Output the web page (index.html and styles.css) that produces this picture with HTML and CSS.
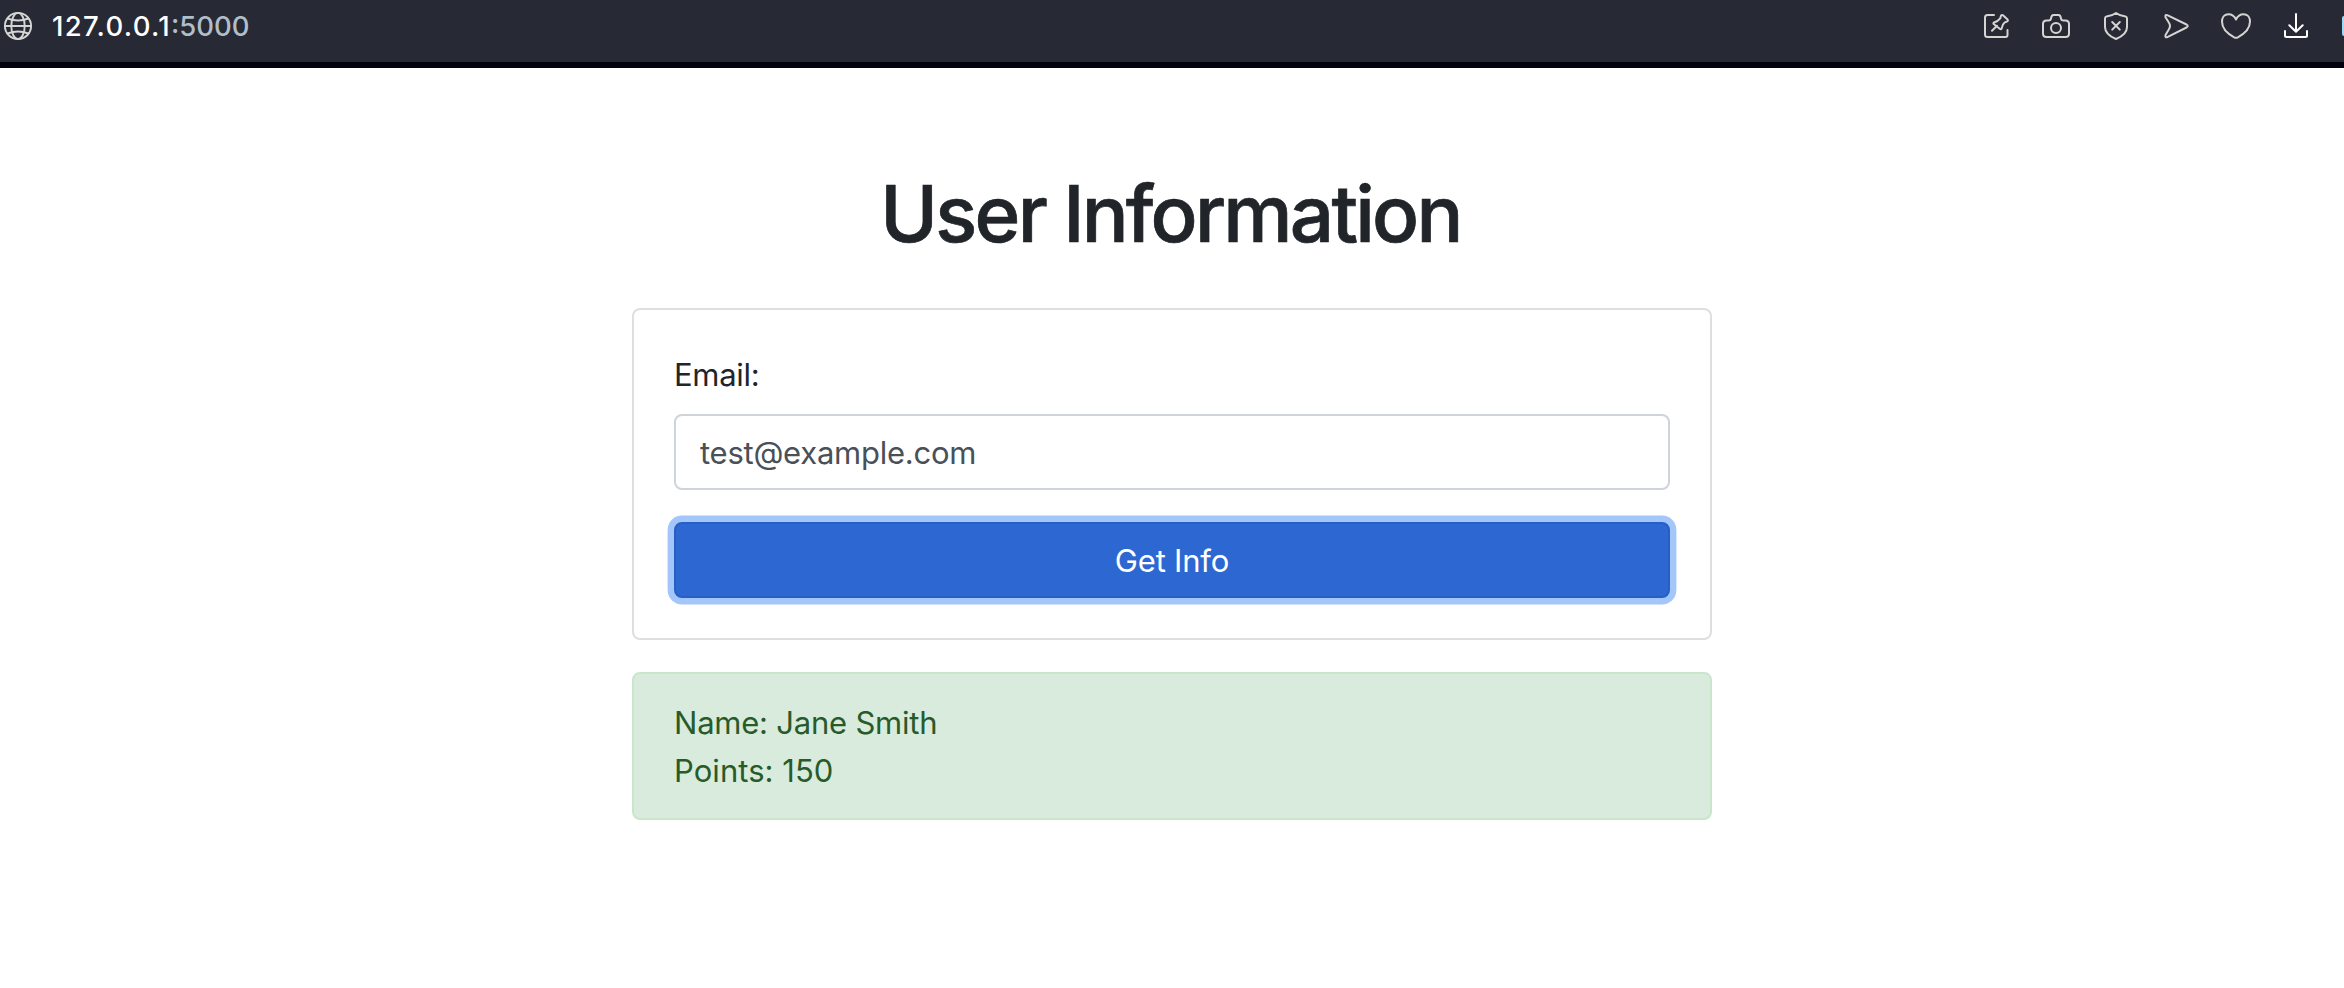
FILE: index.html
```html
<!DOCTYPE html>
<html lang="en">
<head>
<meta charset="utf-8">
<title>User Information</title>
<link rel="stylesheet" href="styles.css">
</head>
<body>
<header class="toolbar">
  <div class="address">
    <svg class="globe" width="30" height="30" viewBox="0 0 30 30">
      <circle cx="15" cy="15" r="13.1"/><ellipse cx="15" cy="15" rx="6.7" ry="13.1"/>
      <path d="M2 15H28M4.6 7.5Q15 11.5 25.4 7.5M4.6 22.5Q15 18.500 25.400 22.500"/>
    </svg>
    <span class="url"><span class="host">127.0.0.1</span><span class="port">:5000</span></span>
  </div>
  <div class="actions">
    <svg width="60" height="52" viewBox="0 0 60 52"><path d="M28 15H21.500Q19 15 19 17.500V34.500Q19 37 21.500 37H39.500Q41.500 37 41.500 35V30M26 30.700L31 25.700M27.600 22.800Q31.800 21.500 34.200 18.400L35 15.800Q35.700 14.400 37 15.300L41.600 19.500Q42.400 20.500 41.200 21.400L38.400 22.700Q36.500 24.200 36 27.400Q35.600 30 33.700 28.700L28 24.200Q27 23.300 27.600 22.800Z"/></svg>
    <svg width="60" height="52" viewBox="0 0 60 52"><path d="M20.500 20.500H22.500Q24.800 20.500 25 18.500Q25.500 15 27.500 15H32.500Q34.500 15 35 18.500Q35.200 20.500 37.500 20.500H39.500Q43 20.500 43 24V33.500Q43 37 39.500 37H20.500Q17 37 17 33.500V24Q17 20.500 20.500 20.500Z"/><circle cx="30" cy="28" r="5"/></svg>
    <svg width="60" height="52" viewBox="0 0 60 52"><path d="M30 13Q34 16 39.500 16.500Q41 16.700 41 18.500V27Q41 34.500 30 39Q19 34.500 19 27V18.500Q19 16.700 20.500 16.500Q26 16 30 13ZM26.200 22L33.800 29.600M33.800 22L26.200 29.600"/></svg>
    <svg width="60" height="52" viewBox="-1 0 60 52"><path d="M20.800 15.300L39.500 24.500Q42 26 39.500 27.500L20.800 36.900Q17.800 38.300 18.500 35L21.500 30Q24.500 26 21.500 22L18.500 17.200Q17.800 14 20.800 15.300Z"/></svg>
    <svg width="60" height="52" viewBox="0 0 60 52"><path d="M30 19.500Q27.500 14.300 22.500 14.300C17.500 14.300 16 18.500 16 21.500C16 29 23 34.500 28.200 37.300Q30 38.200 31.800 37.300C37 34.500 44 29 44 21.500C44 18.500 42.500 14.300 37.500 14.300Q32.500 14.300 30 19.500Z"/></svg>
    <svg class="download" width="60" height="52" viewBox="0 0 60 52"><path d="M30 14V31.500M23.300 25.300L30 31.800L36.700 25.300M19 31V35.500Q19 37 20.500 37H39.500Q41 37 41 35.500V31"/></svg>
    <span class="edge-item"></span>
  </div>
</header>
<main class="container">
  <h1>User Information</h1>
  <form class="card">
    <label for="email">Email:</label>
    <input id="email" type="email" value="test@example.com">
    <button type="button">Get Info</button>
  </form>
  <div class="alert">
    <div><span class="name">Name: Jane Smith</span></div>
    <div><span class="points">Points: 150</span></div>
  </div>
</main>
</body>
</html>
```
FILE: styles.css
```css
* { box-sizing: border-box; }
body {
  margin: 0;
  height: 988px;
  overflow: hidden;
  background: #fff;
  color: #212529;
  font: 400 31px/48px Inter, "Liberation Sans", sans-serif;
}
.toolbar {
  display: flex;
  justify-content: space-between;
  height: 68px;
  background: #272934;
  border-bottom: 6px solid #00000f;
}
.address { display: flex; align-items: center; height: 52px; padding-left: 3px; gap: 19px; }
.url { font-size: 27.5px; font-weight: 500; line-height: 52px; color: #fff; white-space: nowrap; }
.host { letter-spacing: 1.3px; }
.port { color: #b0bec9; }
.actions { display: flex; height: 52px; }
svg { fill: none; stroke: #d4d4d3; stroke-width: 2; stroke-linecap: round; stroke-linejoin: round; }
.globe { stroke-width: 1.9; }
.actions .download { stroke: #fff; }
.edge-item { width: 2px; height: 20px; margin: 16px 0 0 16px; background: #9bd9fb; border-radius: 2px 0 0 2px; }
.container { width: 1080px; margin: 96px auto 0; }
h1 {
  margin: 0 0 48px;
  font-size: 78px;
  font-weight: 500;
  -webkit-text-stroke: 0.7px #212529;
  line-height: 100px;
  height: 96px;
  padding-right: 3px;
  text-align: center;
  letter-spacing: -2.75px;
  white-space: nowrap;
}
.card {
  display: flex;
  flex-direction: column;
  height: 332px;
  margin: 0 0 32px;
  padding: 40px;
  border: 2px solid #dfdfdf;
  border-radius: 8px;
}
label { height: 48px; padding-top: 1px; margin-bottom: 16px; letter-spacing: -0.3px; }
input {
  height: 76px;
  margin: 0 0 32px;
  padding: 12px 24px;
  border: 2px solid #ced4da;
  border-radius: 8px;
  background: #fff;
  color: #495057;
  font: inherit;
  letter-spacing: -0.25px;
}
button {
  height: 76px;
  padding: 13px 24px 11px;
  border: 2px solid #295fc5;
  border-radius: 8px;
  background: #2d67d2;
  box-shadow: 0 0 0 6.4px #a3c6fb;
  color: #fff;
  font: inherit;
  letter-spacing: -0.2px;
}
.alert {
  height: 148px;
  padding: 25px 40px 23px;
  border: 2px solid #c9e6cd;
  border-radius: 8px;
  background: #d9ebdc;
  color: #285b2a;
  letter-spacing: -0.22px;
}
.points { letter-spacing: 0.05px; }
```
